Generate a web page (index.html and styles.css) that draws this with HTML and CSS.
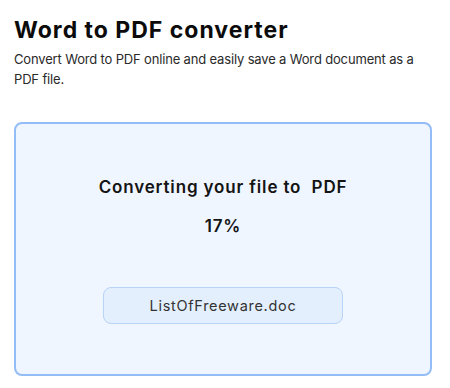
FILE: index.html
```html
<!DOCTYPE html>
<html lang="en">
<head>
  <meta charset="UTF-8">
  <title>Word to PDF converter</title>
  <meta name="viewport" content="width=device-width, initial-scale=1">
  <link rel="stylesheet" href="styles.css">
</head>
<body>
  <div class="page">
    <h1 class="title">Word to PDF converter</h1>
    <p class="intro">Convert Word to PDF online and easily save a Word document as a PDF file.</p>

    <!-- progress card -->
    <div class="convert-card">
      <div class="convert-status">Converting your file to&nbsp; PDF</div>
      <div class="convert-percent" id="percent">17%</div>
      <div class="file-pill">ListOfFreeware.doc</div>
    </div>
  </div>
</body>
</html>
```

FILE: styles.css
```css
* {
  box-sizing: border-box;
}

html, body {
  margin: 0;
  padding: 0;
  background: #ffffff;
  font-family: 'Inter', 'Noto Sans', sans-serif;
  color: #111;
}

.page {
  padding: 16px 18px 0 14px;
}

.title {
  margin: 0;
  font-size: 23px;
  line-height: 28px;
  font-weight: 700;
  letter-spacing: 1px;
  color: #0b0b0b;
}

.intro {
  margin: 5px 0 0;
  font-size: 13px;
  line-height: 20px;
  letter-spacing: -0.16px;
  color: #2a2a2a;
}

.convert-card {
  margin-top: 33px;
  width: 418px;
  height: 254px;
  background: #f0f6ff;
  border: 2px solid #94bdf8;
  border-radius: 8px;
  padding: 51px 0 0;
  display: flex;
  flex-direction: column;
  align-items: center;
}

.convert-status,
.convert-percent {
  font-size: 17px;
  line-height: 24px;
  font-weight: 600;
  letter-spacing: 0.85px;
  color: #141414;
}

.convert-percent {
  margin-top: 15px;
}

.file-pill {
  margin-top: 49px;
  width: 240px;
  height: 37px;
  display: flex;
  align-items: center;
  justify-content: center;
  background: #e3effd;
  border: 1px solid #b7d3f6;
  border-radius: 8px;
  font-size: 14.5px;
  letter-spacing: 0.7px;
  color: #333;
}
```
